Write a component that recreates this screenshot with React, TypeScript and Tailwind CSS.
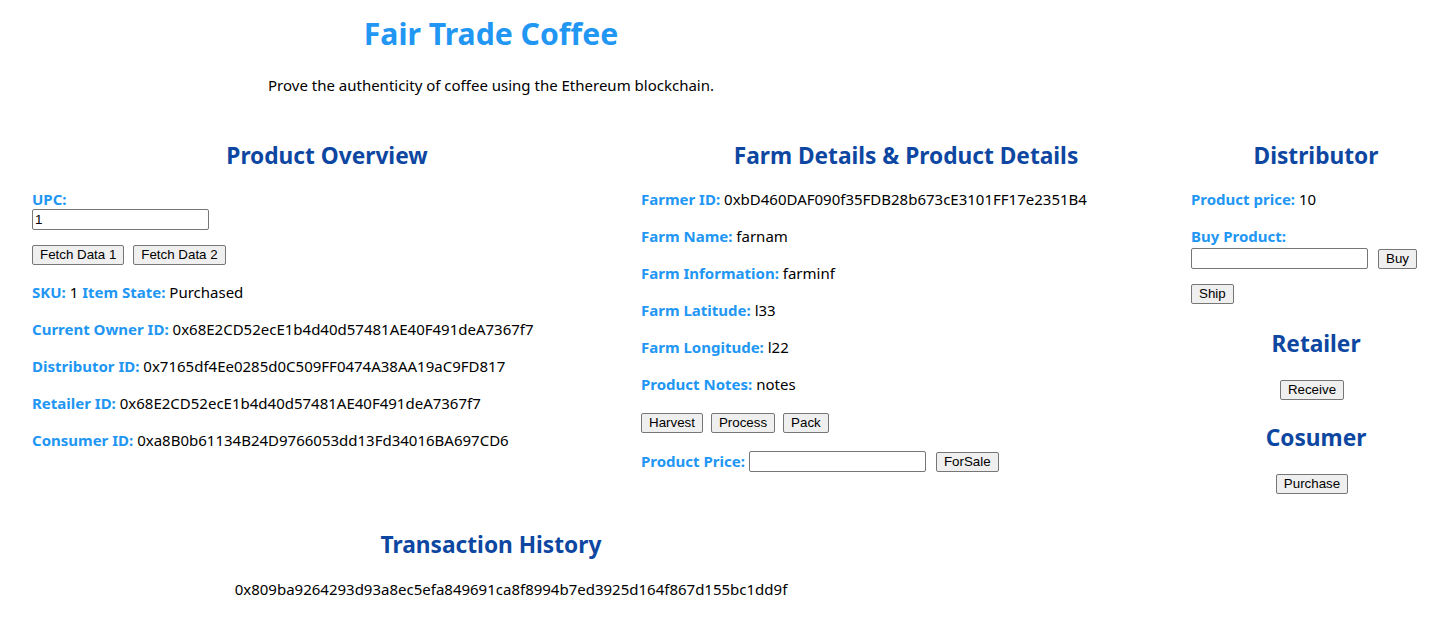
import React from "react";

const font = { fontFamily: '"Noto Sans", "Open Sans", sans-serif' };

const Btn = ({ children }: { children: React.ReactNode }) => (
  <button className="h-[20px] px-[7px] bg-[#efefef] border border-[#767676] rounded-[2px] text-[13.33px] leading-[18px] text-black font-['Liberation_Sans',Arial,sans-serif]">
    {children}
  </button>
);

const Field = ({ value }: { value?: string }) => (
  <input
    defaultValue={value}
    className="block h-[21px] w-[177px] px-[2px] border border-[#767676] rounded-[2px] text-[13.33px] text-black font-['Liberation_Sans',Arial,sans-serif]"
  />
);

const Row = ({ label, value }: { label: string; value: string }) => (
  <p className="leading-[21px] mb-[16px] whitespace-nowrap">
    <span className="font-bold text-[#2196f3]">{label}</span> {value}
  </p>
);

const H2 = ({ children, className = "" }: { children: React.ReactNode; className?: string }) => (
  <h2 className={`text-[22.7px] leading-[32px] font-bold text-[#0d47a1] text-center ${className}`}>{children}</h2>
);

export default function App() {
  return (
    <div className="bg-white text-black text-[15px] leading-[21px] w-[1435px] h-[619px] overflow-hidden relative" style={font}>
      {/* header */}
      <div className="w-[982px] text-center pt-[12px]">
        <h1 className="text-[30.2px] leading-[43px] font-bold text-[#2196f3]">Fair Trade Coffee</h1>
        <p className="mt-[20px]">Prove the authenticity of coffee using the Ethereum blockchain.</p>
      </div>

      <div className="flex pl-[32px] mt-[44px]">
        {/* product overview */}
        <div className="w-[590px] shrink-0">
          <H2 className="mb-[17px]">Product Overview</H2>
          <div className="font-bold text-[#2196f3]">UPC:</div>
          <div className="-mt-px">
            <Field value="1" />
          </div>
          <div className="flex gap-[9px] mt-[15px] mb-[17px]">
            <Btn>Fetch Data 1</Btn>
            <Btn>Fetch Data 2</Btn>
          </div>
          <p className="mb-[16px]">
            <span className="font-bold text-[#2196f3]">SKU:</span> 1{" "}
            <span className="font-bold text-[#2196f3]">Item State:</span> Purchased
          </p>
          <Row label="Current Owner ID:" value="0x68E2CD52ecE1b4d40d57481AE40F491deA7367f7" />
          <Row label="Distributor ID:" value="0x7165df4Ee0285d0C509FF0474A38AA19aC9FD817" />
          <Row label="Retailer ID:" value="0x68E2CD52ecE1b4d40d57481AE40F491deA7367f7" />
          <Row label="Consumer ID:" value="0xa8B0b61134B24D9766053dd13Fd34016BA697CD6" />
        </div>

        {/* farm details */}
        <div className="w-[530px] shrink-0 ml-[19px]">
          <H2 className="mb-[17px]">Farm Details &amp; Product Details</H2>
          <Row label="Farmer ID:" value="0xbD460DAF090f35FDB28b673cE3101FF17e2351B4" />
          <Row label="Farm Name:" value="farnam" />
          <Row label="Farm Information:" value="farminf" />
          <Row label="Farm Latitude:" value="l33" />
          <Row label="Farm Longitude:" value="l22" />
          <Row label="Product Notes:" value="notes" />
          <div className="flex gap-[8px] mt-[18px] mb-[18px]">
            <Btn>Harvest</Btn>
            <Btn>Process</Btn>
            <Btn>Pack</Btn>
          </div>
          <div className="flex items-center">
            <span className="font-bold text-[#2196f3] mr-[4px]">Product Price:</span>
            <Field />
            <span className="w-[10px]" />
            <Btn>ForSale</Btn>
          </div>
        </div>

        {/* distributor / retailer / consumer */}
        <div className="w-[250px] shrink-0 ml-[20px]">
          <H2 className="mb-[17px]">Distributor</H2>
          <Row label="Product price:" value="10" />
          <div className="font-bold text-[#2196f3]">Buy Product:</div>
          <div className="flex items-center gap-[10px] mt-[1px]">
            <Field />
            <Btn>Buy</Btn>
          </div>
          <div className="flex mt-[15px]">
            <Btn>Ship</Btn>
          </div>
          <H2 className="mt-[24px]">Retailer</H2>
          <div className="flex justify-center pr-[8px] mt-[20px]">
            <Btn>Receive</Btn>
          </div>
          <H2 className="mt-[22px]">Cosumer</H2>
          <div className="flex justify-center pr-[8px] mt-[20px]">
            <Btn>Purchase</Btn>
          </div>
        </div>
      </div>

      {/* transaction history */}
      <div className="w-[982px] text-center absolute top-[529px] left-0">
        <H2>Transaction History</H2>
        <ul className="pl-[40px] mt-[18px] list-none">
          <li>0x809ba9264293d93a8ec5efa849691ca8f8994b7ed3925d164f867d155bc1dd9f</li>
        </ul>
      </div>
    </div>
  );
}
